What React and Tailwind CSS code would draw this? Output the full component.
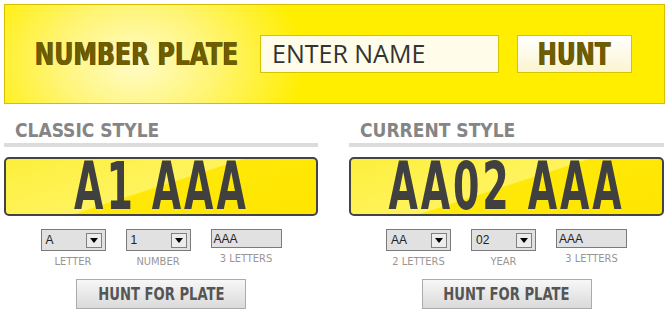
import React from 'react';

const Select = ({ value }) => (
  <div className="w-[65px] h-[22px] border border-[#7a7a7a] bg-[#e1e1e1] flex items-center justify-between pl-[4px] pr-[3px]">
    <span className="font-['Liberation_Sans',sans-serif] text-[12px] text-[#222]">{value}</span>
    <div className="w-[16px] h-[15px] border border-[#808080] bg-[#ececec] flex items-center justify-center">
      <svg width="8" height="5" viewBox="0 0 8 5">
        <path d="M0 0h8L4 5z" fill="#000" />
      </svg>
    </div>
  </div>
);

const TextBox = ({ value }) => (
  <div className="w-[71px] h-[19px] border border-[#7a7a7a] bg-[#e1e1e1] flex items-center pl-[2px]">
    <span className="font-['Liberation_Sans',sans-serif] text-[12px] text-[#222]">{value}</span>
  </div>
);

const Field = ({ children, label }) => (
  <div className="flex flex-col items-center">
    {children}
    <span className="mt-[4px] text-[11px] leading-[13px] text-[#999595] font-['DejaVu_Sans_Condensed',sans-serif]">
      {label}
    </span>
  </div>
);

const Column = ({ title, plate, fields }) => (
  <div className="flex flex-col">
    <h2 className="pl-[11px] text-[19px] leading-[19px] font-bold text-[#858585] font-['DejaVu_Sans_Condensed',sans-serif]">
      {title}
    </h2>
    <div className="mt-[3px] h-[4px] bg-[#dcdcdc]" />
    <div className="mt-[10px] h-[59px] rounded-[5px] border-2 border-[#444] bg-[linear-gradient(162deg,#fdef3c_0%,#fff35e_49%,#ffe808_50%,#ffe600_100%)] flex items-center justify-center">
      <span className="inline-block scale-x-[0.64] text-[66px] leading-[66px] font-bold text-[#404040] tracking-[4.5px] whitespace-nowrap font-['DejaVu_Sans_Condensed',sans-serif]">
        {plate}
      </span>
    </div>
    <div className="mt-[13px] flex justify-center items-start gap-[20px]">
      <Field label={fields[0][1]}><Select value={fields[0][0]} /></Field>
      <Field label={fields[1][1]}><Select value={fields[1][0]} /></Field>
      <Field label={fields[2][1]}><TextBox value={fields[2][0]} /></Field>
    </div>
    <div className="mt-[11px] flex justify-center">
      <button className="w-[170px] h-[30px] border border-[#ababab] bg-gradient-to-b from-[#f7f7f7] to-[#dadada] flex items-center justify-center">
        <span className="inline-block scale-x-[0.86] text-[17px] leading-[20px] font-bold text-[#555] whitespace-nowrap font-['DejaVu_Sans_Condensed',sans-serif]">
          HUNT FOR PLATE
        </span>
      </button>
    </div>
  </div>
);

export default function App() {
  return (
    <div className="w-[670px] h-[316px] bg-white p-[4px] overflow-hidden">
      <header className="w-[661px] h-[100px] border border-[#d8bd00] bg-[radial-gradient(ellipse_170px_125px_at_130px_58px,#fffcc8_0%,#fff578_45%,#ffee00_100%)] flex items-center pl-[30px]">
        <div className="w-[225px]">
          <h1 className="inline-block origin-left scale-x-[0.82] text-[32px] leading-[32px] font-bold text-[#6f5e00] whitespace-nowrap font-['DejaVu_Sans_Condensed',sans-serif] [text-shadow:-1px_0_0_#4f4300]">
            NUMBER PLATE
          </h1>
        </div>
        <div className="w-[239px] h-[38px] border border-[#d6c400] bg-[#fffdea] flex items-center pl-[11px]">
          <span className="text-[25px] text-[#333] font-['Open_Sans',sans-serif]">ENTER NAME</span>
        </div>
        <button className="ml-[18px] w-[115px] h-[38px] border border-[#d6c400] bg-gradient-to-b from-white to-[#fbf4cf] flex items-center justify-center">
          <span className="inline-block scale-x-[0.8] text-[32px] leading-[32px] font-bold text-[#6f5e00] font-['DejaVu_Sans_Condensed',sans-serif] [text-shadow:-1px_0_0_#4f4300]">
            HUNT
          </span>
        </button>
      </header>
      <div className="mt-[17px] flex gap-[31px]">
        <div className="w-[314px]">
          <Column
            title="CLASSIC STYLE"
            plate="A1 AAA"
            fields={[['A', 'LETTER'], ['1', 'NUMBER'], ['AAA', '3 LETTERS']]}
          />
        </div>
        <div className="w-[315px]">
          <Column
            title="CURRENT STYLE"
            plate="AA02 AAA"
            fields={[['AA', '2 LETTERS'], ['02', 'YEAR'], ['AAA', '3 LETTERS']]}
          />
        </div>
      </div>
    </div>
  );
}
